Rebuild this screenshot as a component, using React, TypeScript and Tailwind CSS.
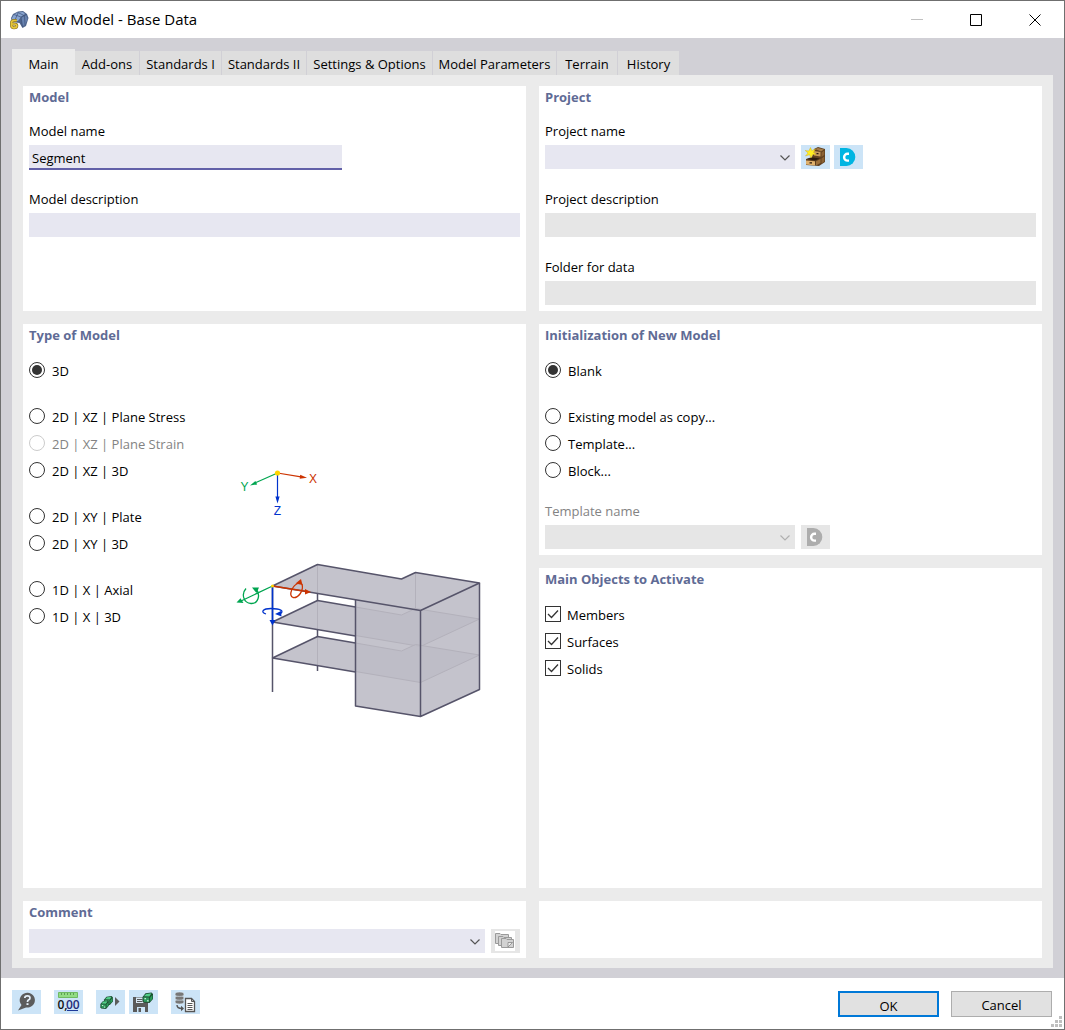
import React, { useId, useState } from 'react';
import clsx from 'clsx';

const TABS = [
    { label: 'Main', width: 'w-[63px]' },
    { label: 'Add-ons', width: 'w-[65px]' },
    { label: 'Standards I', width: 'w-[82px]' },
    { label: 'Standards II', width: 'w-[85px]' },
    { label: 'Settings & Options', width: 'w-[126px]' },
    { label: 'Model Parameters', width: 'w-[124px]' },
    { label: 'Terrain', width: 'w-[61px]' },
    { label: 'History', width: 'w-[62px]' },
];

const MODEL_TYPES = [
    [{ label: '3D' }],
    [
        { label: '2D | XZ | Plane Stress' },
        { label: '2D | XZ | Plane Strain', disabled: true },
        { label: '2D | XZ | 3D' },
    ],
    [{ label: '2D | XY | Plate' }, { label: '2D | XY | 3D' }],
    [{ label: '1D | X | Axial' }, { label: '1D | X | 3D' }],
];

const INIT_TYPES = [
    [{ label: 'Blank' }],
    [{ label: 'Existing model as copy...' }, { label: 'Template...' }, { label: 'Block...' }],
];

interface PanelProps {
    title?: string;
    className?: string;
    children?: React.ReactNode;
}

const Panel: React.FC<PanelProps> = ({ title, className, children }) => (
    <section className={clsx('bg-white px-1.5', className)}>
        {title && <h2 className="h-[22px] font-bold leading-[22px] text-[#5f6b95]">{title}</h2>}
        {children}
    </section>
);

interface FieldProps {
    label: string;
    disabled?: boolean;
    children: (id: string) => React.ReactNode;
}

const Field: React.FC<FieldProps> = ({ label, disabled, children }) => {
    const id = useId();
    return (
        <div className="h-12">
            <label htmlFor={id} className={clsx('mb-1 block leading-5', disabled && 'text-[#838383]')}>
                {label}
            </label>
            {children(id)}
        </div>
    );
};

interface ComboProps {
    id?: string;
    label?: string;
    disabled?: boolean;
    className?: string;
}

const Combo: React.FC<ComboProps> = ({ id, label, disabled, className }) => (
    <div className={clsx('relative h-6', className)}>
        <select
            id={id}
            aria-label={label}
            disabled={disabled}
            className="block h-6 w-full appearance-none bg-[#e7e7f1] px-1 outline-none disabled:bg-[#e6e6e6]"
        />
        <svg
            viewBox="0 0 10 6"
            className={clsx(
                'pointer-events-none absolute right-[5px] top-[10px] h-1.5 w-2.5',
                disabled ? 'text-[#b0b0b0]' : 'text-[#555]'
            )}
        >
            <path d="M0.5 0.5 L5 5 L9.5 0.5" fill="none" stroke="currentColor" strokeWidth="1.2" />
        </svg>
    </div>
);

interface IconButtonProps {
    label: string;
    disabled?: boolean;
    children: React.ReactNode;
}

const IconButton: React.FC<IconButtonProps> = ({ label, disabled, children }) => (
    <button
        type="button"
        aria-label={label}
        disabled={disabled}
        className="h-6 w-[29px] shrink-0 bg-[#cce4f7] disabled:bg-[#e6e6e6]"
    >
        <svg viewBox="0 0 29 24" className="block h-6 w-[29px]">
            {children}
        </svg>
    </button>
);

interface RadioListProps {
    name: string;
    groups: { label: string; disabled?: boolean }[][];
}

const RadioList: React.FC<RadioListProps> = ({ name, groups }) => {
    const [value, setValue] = useState(groups[0][0].label);
    return (
        <div className="flex flex-col gap-[19px]">
            {groups.map((group) => (
                <div key={group[0].label}>
                    {group.map((option) => (
                        <label
                            key={option.label}
                            className={clsx('flex h-[27px] items-start gap-[7px] pt-[5px]', option.disabled && 'text-[#838383]')}
                        >
                            <input
                                type="radio"
                                name={name}
                                disabled={option.disabled}
                                checked={value === option.label}
                                onChange={() => setValue(option.label)}
                                className="size-4 shrink-0 appearance-none rounded-full border border-[#333] bg-white bg-clip-content p-0.5 checked:bg-[#333] disabled:border-[#ccc]"
                            />
                            <span className="leading-[18px]">{option.label}</span>
                        </label>
                    ))}
                </div>
            ))}
        </div>
    );
};

const CheckRow: React.FC<{ label: string }> = ({ label }) => {
    const [checked, setChecked] = useState(true);
    return (
        <label className="flex h-[27px] items-start gap-1.5 pt-[5px]">
            <span className="relative size-4">
                <input
                    type="checkbox"
                    checked={checked}
                    onChange={(e) => setChecked(e.target.checked)}
                    className="block size-4 appearance-none border border-[#333] bg-white"
                />
                {checked && (
                    <svg viewBox="0 0 16 16" className="pointer-events-none absolute inset-0 size-4">
                        <path d="M3 8 L6.5 11.5 L13 4.5" fill="none" stroke="#333" strokeWidth="1.3" />
                    </svg>
                )}
            </span>
            <span className="leading-[18px]">{label}</span>
        </label>
    );
};

const AppIcon = () => (
    <svg viewBox="0 0 20 20" className="size-5">
        <path d="M2 8 L4 4 L9 1.5 L14 1 L18 4 L19.5 8 L17 16 L13.5 18 L10.5 13 L3 12 Z" fill="#4f658c" />
        <path d="M3 8 L5 4.5 L9 2.5 L14 2 L16 4 L12 7 L9 11 L3 11 Z" fill="#89a5d0" />
        <path d="M12 8 L17 5 L18.5 9 L16 15 L13.5 16 Z" fill="#6883b0" />
        <path d="M5 4.5 L12 7 L17.5 4.5 M9 2.5 L15 5.5 M12 7 L13.5 17 M9 3 L6 10 M15.5 6 L16 15" fill="none" stroke="#3c5078" strokeWidth="0.7" />
        <g fill="none" strokeLinejoin="round">
            <path d="M7.8 10.5 H5 Q2.5 10.5 2.5 13 V15 Q2.5 17.8 5 17.8 Q7.8 17.8 7.8 15.8 Q7.8 14 5 14 H3" stroke="#8a7521" strokeWidth="3" />
            <path d="M7.8 10.5 H5 Q2.5 10.5 2.5 13 V15 Q2.5 17.8 5 17.8 Q7.8 17.8 7.8 15.8 Q7.8 14 5 14 H3" stroke="#e8c83a" strokeWidth="1.7" />
        </g>
    </svg>
);

const CenterLogo: React.FC<{ color: string; cut: string }> = ({ color, cut }) => (
    <>
        <path d="M6 3 H12.5 A8.8 9 0 0 1 12.5 21 H6 Z" fill={color} />
        <path d="M15 8.8 H13.5 A3.4 3.4 0 0 0 13.5 15.6 H15" fill="none" stroke={cut} strokeWidth="2.4" />
    </>
);

const DrawerIcon = () => (
    <>
        <path d="M13 4 L17 2 L24 4 V17 L18 21 L5 20 V14 L11 12 Z" fill="#5f4020" />
        <path d="M14 4 L17 3 L23 4.5 L20 6.5 Z" fill="#a57c48" />
        <path d="M13 6 L19.5 7 V11.5 L13 10.5 Z" fill="#c79b5c" />
        <path d="M20.5 7.5 L23.3 5.5 V10 L20.5 12 Z M20.5 13.5 L23.3 11.5 V16.5 L20.5 18.5 Z" fill="#8a6234" />
        <path d="M6 14 L12 12.5 L19 13.5 L14 15.5 Z" fill="#2a1b0d" />
        <path d="M5 15.5 L14 16.2 V20.5 L5 19.5 Z" fill="#dfb16d" />
        <path d="M15 16.2 L19.5 14 V18 L15 20.5 Z" fill="#9d703a" />
        <path d="M8.5 17.2 H11 V18.6 H8.5 Z M15.5 8 H17.5 V9.3 H15.5 Z" fill="#2a1b0d" />
        <path d="M9.5 2.5 L10.8 5.7 L14.5 4 L12.6 7.3 L15 9.5 L11.8 9.4 L10 13 L8.5 9.7 L4.5 11 L7 8 L4.2 5.5 L7.8 6 Z" fill="#ffee21" stroke="#cda51c" strokeWidth="0.4" />
    </>
);

const CubeShape = () => (
    <>
        <path d="M0.5 4.5 L3.5 0.8 L9.5 0 L11 1.5 V6.5 L7.5 10.5 L1.5 10 L0.5 8.5 Z" fill="#1c4b30" />
        <path d="M1.8 3.8 L4.2 1.4 L9.5 0.8 L7.4 4 Z" fill="#52cf88" />
        <path d="M1.3 4.8 L7.2 5 V9.6 L1.8 9.2 Z" fill="#2f9a5d" />
        <path d="M8.1 5 L10.4 2.2 V6.2 L8.1 9 Z" fill="#28a05a" />
        <path d="M2.5 5.5 H4 V6.8 H2.5 Z M5.2 7.5 H6.5 V9 H5.2 Z" fill="#c4efd4" />
    </>
);

const BuildingDiagram = () => (
    <svg viewBox="0 0 260 265" className="h-[265px] w-[260px]" role="img" aria-label="3D model">
        {/* Global axes */}
        <g fill="none" strokeWidth="1.2">
            <path d="M47.5 13 L26 22.5" stroke="#00a550" />
            <path d="M47.5 13 L71 16.8" stroke="#cc3300" />
            <path d="M47.5 13 V38" stroke="#0033cc" />
        </g>
        <path d="M20 25.5 L25.4 20.9 L27.2 24.4 Z" fill="#00a550" />
        <path d="M77 17.8 L70.2 14.7 L69.7 18.8 Z" fill="#cc3300" />
        <path d="M47.5 43.5 L45.4 36.5 H49.6 Z" fill="#0033cc" />
        <circle cx="47.5" cy="13" r="2.6" fill="#ffd500" />
        <g fontFamily="Liberation Sans, sans-serif" fontSize="12" textAnchor="middle">
            <text x="14.5" y="31" fill="#00a550">Y</text>
            <text x="83" y="23" fill="#cc3300">X</text>
            <text x="47.5" y="55" fill="#0033cc">Z</text>
        </g>

        {/* Columns and floors */}
        <path d="M87.5 105 V211" stroke="#56546a" strokeWidth="1.5" />
        <g fill="#c4c3cc">
            <path d="M42.5 198 L87.5 176.5 L125.5 183 V212 Z" />
            <path d="M42.5 162 L87.5 140.5 L125.5 147 V176 Z" />
            <path d="M125.5 139.5 L190.5 150.5 L249.5 123 V229.5 L190.5 256.5 L125.5 246 Z" />
            <path d="M42.5 126 L87.5 104.5 L171.5 119 L185.5 112.5 L249.5 123 L190.5 150.5 Z" />
        </g>
        <g fill="#bdbcc6" fillOpacity="0.8" stroke="#b3b1bb" strokeWidth="1">
            <path d="M125.5 147 L171.5 155 L185.5 148.5 L249.5 159 L190.5 186.5 L125.5 175.5 Z" />
            <path d="M125.5 183 L171.5 191 L185.5 184.5 L249.5 195 L190.5 222.5 L125.5 211.5 Z" />
        </g>
        <g fill="none" stroke="#b3b1bb">
            <path d="M87.5 105 V134 M87.5 141 V170 M87.5 177 V206 M185.5 113 V148" />
        </g>
        <g fill="none" stroke="#56546a" strokeWidth="1.5" strokeLinejoin="round">
            <path d="M125.5 183 L87.5 176.5 L42.5 198 L125.5 212" />
            <path d="M125.5 147 L87.5 140.5 L42.5 162 L125.5 176" />
            <path d="M42.5 126 L87.5 104.5 L171.5 119 L185.5 112.5 L249.5 123 L190.5 150.5 Z" />
            <path d="M42.5 126 V232 M125.5 139.5 V246 L190.5 256.5 L249.5 229.5 V123 M190.5 150.5 V256.5" />
        </g>

        {/* Local axes with rotations */}
        <g fill="none" strokeWidth="1.3">
            <path d="M42.5 126 L11 141 M16 128.5 C11 134 13.5 143 21 143.5 C28 144 31 135 26 129" stroke="#00a550" />
            <path d="M42.5 126 L77 131.5 M69 123 C62 125 58 136 63 137.5 C68 138.5 74 131 72 124" stroke="#cc3300" />
            <path d="M36 154 C30 152 33 148.5 41 148.5 C50 148.5 55 151 50 154" stroke="#0033cc" />
            <path d="M42.5 126 V162" stroke="#0033cc" strokeWidth="1.6" />
        </g>
        <path d="M6.5 142.5 L10.5 138.2 L13.5 143 Z M22 127.5 L29 127.5 L26.5 133 Z" fill="#00a550" />
        <path d="M81 132 L75 129 V134.5 Z M65.5 123.5 L71 119 L72.5 125 Z" fill="#cc3300" />
        <path d="M42.5 165.5 L39.5 160 H45.5 Z M45 154 L51 151 L51.5 156.5 Z" fill="#0033cc" />
        <circle cx="42.5" cy="126" r="1.5" fill="#ffd500" />
    </svg>
);

const App: React.FC = () => {
    const [tab, setTab] = useState('Main');
    const [modelName, setModelName] = useState('Segment');

    return (
        <div className="flex min-h-screen flex-col border border-[#6f6f6f] bg-[#d1d0d6] font-['Open_Sans','Noto_Sans',sans-serif] text-[13px] text-black">
            {/* Title bar */}
            <header className="flex h-[37px] shrink-0 items-center bg-white pl-2">
                <AppIcon />
                <h1 className="ml-1.5 flex-1 text-[15px]">New Model - Base Data</h1>
                {[
                    { label: 'Minimize', path: 'M0 5.5 H12', color: '#c0c0c0' },
                    { label: 'Maximize', path: 'M0.5 0.5 H11.5 V11.5 H0.5 Z', color: '#000' },
                    { label: 'Close', path: 'M0.5 0.5 L11.5 11.5 M11.5 0.5 L0.5 11.5', color: '#000' },
                ].map((b) => (
                    <button key={b.label} type="button" aria-label={b.label} className="flex h-9 w-[59px] items-center justify-center">
                        <svg viewBox="0 0 12 12" className="size-3">
                            <path d={b.path} fill="none" stroke={b.color} />
                        </svg>
                    </button>
                ))}
            </header>

            <main className="flex flex-1 flex-col px-[11px] pb-2.5 pt-[11px]">
                {/* Tabs */}
                <div role="tablist" className="flex h-[26px] items-end">
                    {TABS.map((t) => (
                        <button
                            key={t.label}
                            type="button"
                            role="tab"
                            aria-selected={tab === t.label}
                            onClick={() => setTab(t.label)}
                            className={clsx(
                                'shrink-0 whitespace-nowrap',
                                t.width,
                                tab === t.label ? 'h-[26px] bg-[#ebebeb] pt-1.5' : 'h-6 border-r border-[#d1d0d6] bg-[#dedede] pt-1'
                            )}
                        >
                            {t.label}
                        </button>
                    ))}
                </div>

                <div className="grid flex-1 grid-cols-2 gap-x-[13px] bg-[#ebebeb] px-[11px] pb-2.5 pt-[11px]">
                    <div className="flex flex-col gap-[13px]">
                        <Panel title="Model" className="h-[225px]">
                            <div className="mt-[13px] flex flex-col gap-5">
                                <Field label="Model name">
                                    {(id) => (
                                        <input
                                            id={id}
                                            type="text"
                                            value={modelName}
                                            onChange={(e) => setModelName(e.target.value)}
                                            className="block h-[25px] w-[313px] border-b-2 border-[#6260a8] bg-[#e7e7f1] px-[3px] pt-0.5 outline-none"
                                        />
                                    )}
                                </Field>
                                <Field label="Model description">
                                    {(id) => <input id={id} type="text" className="block h-6 w-full bg-[#e7e7f1] px-[3px] outline-none" />}
                                </Field>
                            </div>
                        </Panel>

                        <Panel title="Type of Model" className="flex-1">
                            <div className="mt-[11px] flex">
                                <div className="w-[201px] shrink-0">
                                    <RadioList name="model-type" groups={MODEL_TYPES} />
                                </div>
                                <div className="pt-[103px]">
                                    <BuildingDiagram />
                                </div>
                            </div>
                        </Panel>

                        <Panel title="Comment" className="h-[57px]">
                            <div className="mt-1.5 flex gap-1.5">
                                <Combo label="Comment" className="flex-1" />
                                <IconButton label="Comment library" disabled>
                                    <path d="M4 2 H24 V22 H4 Z" fill="#fff" />
                                    <g fill="#d2d2d2" stroke="#9a9a9a">
                                        <path d="M4.5 14.5 V4.5 H9 L10 5.5 H17.5 V14.5 Z" />
                                        <path d="M7.5 16.5 V7.5 H12 L13 8.5 H20.5 V16.5 Z" />
                                        <path d="M10.5 18.5 V9.5 H15 L16 10.5 H22.5 V18.5 Z" />
                                    </g>
                                    <path d="M17 18 V13.5 H21.5 Z" fill="#eee" stroke="#888" strokeWidth="0.8" />
                                </IconButton>
                            </div>
                        </Panel>
                    </div>

                    <div className="flex flex-col gap-[13px]">
                        <Panel title="Project" className="h-[225px]">
                            <div className="mt-[13px] flex flex-col gap-5">
                                <Field label="Project name">
                                    {(id) => (
                                        <div className="flex">
                                            <Combo id={id} className="mr-1.5 w-[250px]" />
                                            <div className="flex gap-1">
                                                <IconButton label="New project">
                                                    <DrawerIcon />
                                                </IconButton>
                                                <IconButton label="Project manager">
                                                    <CenterLogo color="#00b5e2" cut="#fff" />
                                                </IconButton>
                                            </div>
                                        </div>
                                    )}
                                </Field>
                                <Field label="Project description">
                                    {(id) => <input id={id} type="text" disabled className="block h-6 w-full bg-[#e6e6e6] px-[3px]" />}
                                </Field>
                                <Field label="Folder for data">
                                    {(id) => <input id={id} type="text" disabled className="block h-6 w-full bg-[#e6e6e6] px-[3px]" />}
                                </Field>
                            </div>
                        </Panel>

                        <Panel title="Initialization of New Model" className="pb-1.5">
                            <div className="mb-[17px] mt-[11px]">
                                <RadioList name="initialization" groups={INIT_TYPES} />
                            </div>
                            <Field label="Template name" disabled>
                                {(id) => (
                                    <div className="flex gap-1.5">
                                        <Combo id={id} disabled className="w-[250px]" />
                                        <IconButton label="Template manager" disabled>
                                            <CenterLogo color="#adadad" cut="#fff" />
                                        </IconButton>
                                    </div>
                                )}
                            </Field>
                        </Panel>

                        <Panel title="Main Objects to Activate" className="flex-1">
                            <div className="mt-[11px]">
                                <CheckRow label="Members" />
                                <CheckRow label="Surfaces" />
                                <CheckRow label="Solids" />
                            </div>
                        </Panel>

                        <Panel className="h-[57px]" />
                    </div>
                </div>
            </main>

            {/* Bottom toolbar */}
            <footer className="relative flex h-[51px] shrink-0 items-start justify-between bg-white pl-[11px] pr-3 pt-3">
                <div className="flex gap-[13px]">
                    <IconButton label="Help">
                        <path d="M6 20.5 L9.5 15 A7.6 7.4 0 1 1 14 17.5 Z" fill="#5c5c5c" />
                        <path d="M12.8 8 Q12.8 5.8 15.4 5.8 Q18 5.8 18 7.9 Q18 9.2 16.4 10 Q15.5 10.5 15.5 12" fill="none" stroke="#e6f1fa" strokeWidth="1.7" />
                        <path d="M14.5 13.2 H16.5 V15 H14.5 Z" fill="#e6f1fa" />
                    </IconButton>
                    <IconButton label="Units and decimal places">
                        <path d="M4.5 2.5 H23.5 V7.5 H4.5 Z" fill="#92dc84" stroke="#6fba62" />
                        <path d="M7.5 3 V5 M10.5 3 V5 M13.5 3 V5 M16.5 3 V5 M19.5 3 V5" stroke="#5d9e53" />
                        <g fontFamily="Open Sans, sans-serif" fontSize="12" fontWeight="600">
                            <text x="3.5" y="18.5" fill="#111">0,</text>
                            <text x="12" y="18.5" fill="#1e2b78">00</text>
                        </g>
                        <path d="M13 20.5 H24" stroke="#1e3a9a" />
                    </IconButton>
                    <div className="flex gap-1">
                        <IconButton label="Load default">
                            <g transform="translate(7.5 6) scale(0.85)">
                                <CubeShape />
                            </g>
                            <g transform="translate(4 10.5) scale(0.8)">
                                <CubeShape />
                            </g>
                            <path d="M19 7 L23.5 11.5 L19 16 Z" fill="#5c5c5c" />
                        </IconButton>
                        <IconButton label="Save as default">
                            <path d="M4 7 H16 L19 10 V22 H4 Z" fill="#5a5a5a" />
                            <path d="M7 7.5 H14.5 V13 H7 Z" fill="#d9e8f4" />
                            <path d="M8 9.5 H13.5 M8 11.5 H13.5" stroke="#5a5a5a" />
                            <path d="M8 17 H16 V22 H8 Z" fill="#cce4f7" />
                            <path d="M9.5 18 H12 V22 H9.5 Z" fill="#5a5a5a" />
                            <g transform="translate(13 2.5)">
                                <CubeShape />
                            </g>
                        </IconButton>
                    </div>
                    <IconButton label="Copy from database">
                        <g fill="#777" stroke="#dcebf7" strokeWidth="0.6">
                            <ellipse cx="8.5" cy="11.8" rx="4.5" ry="2.2" />
                            <ellipse cx="8.5" cy="8" rx="4.5" ry="2.2" />
                            <ellipse cx="8.5" cy="4.2" rx="4.5" ry="2.2" />
                        </g>
                        <path d="M6 15 Q6 18.5 11 18.5" fill="none" stroke="#555" strokeWidth="1.4" />
                        <path d="M10 15.8 L13 18.5 L10 21.3 Z" fill="#555" />
                        <path d="M14.5 8.5 H20.5 L23.5 11.5 V21.5 H14.5 Z" fill="#fff" stroke="#555" strokeWidth="1.3" />
                        <path d="M20.5 8.5 V11.5 H23.5 M16.5 13.5 H21.5 M16.5 15.5 H21.5 M16.5 17.5 H21.5 M16.5 19.5 H21.5" fill="none" stroke="#555" />
                    </IconButton>
                </div>
                <div className="flex gap-3 pt-px">
                    <button type="submit" className="h-[26px] w-[101px] border-2 border-[#0078d7] bg-[#e1e1e1] pt-1">
                        OK
                    </button>
                    <button type="button" className="h-[26px] w-[101px] border border-[#adadad] bg-[#e1e1e1] pt-1">
                        Cancel
                    </button>
                </div>
                <svg viewBox="0 0 11 11" className="absolute bottom-0.5 right-0.5 size-[11px]">
                    <path d="M8 0h3v3H8z M4 4h3v3H4z M8 4h3v3H8z M0 8h3v3H0z M4 8h3v3H4z M8 8h3v3H8z" fill="#bfbfbf" />
                </svg>
            </footer>
        </div>
    );
};

export default App;
